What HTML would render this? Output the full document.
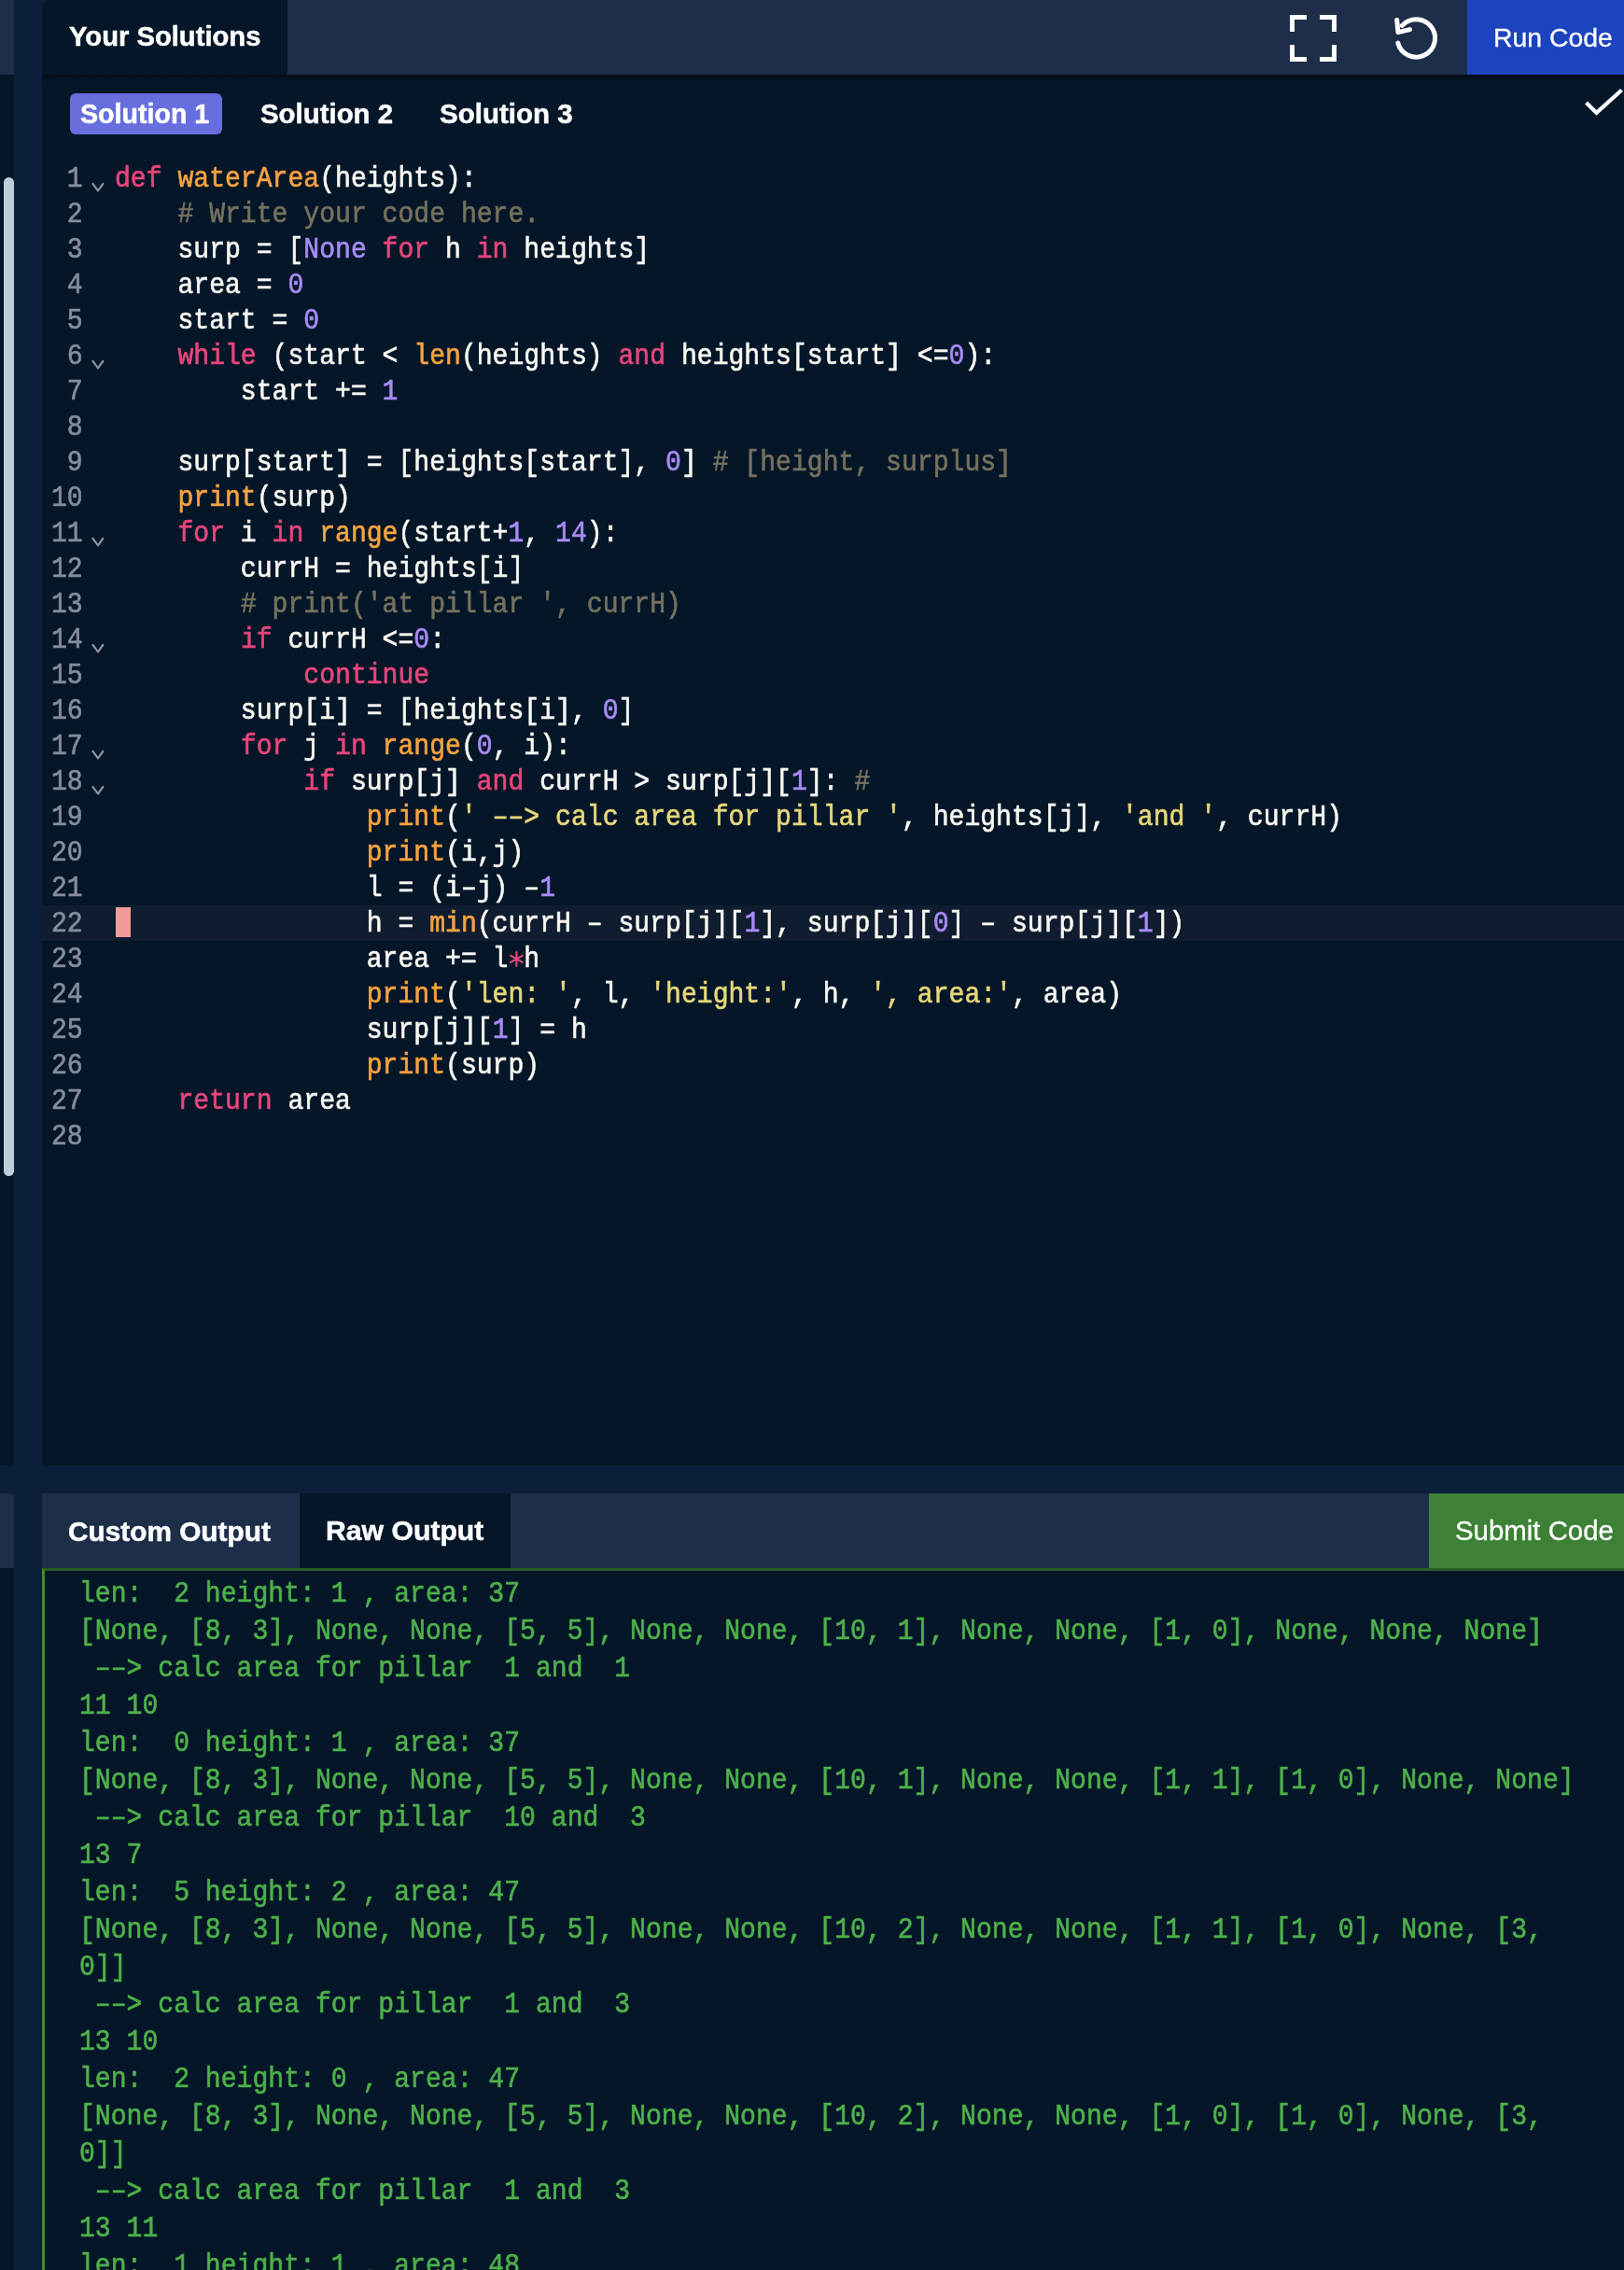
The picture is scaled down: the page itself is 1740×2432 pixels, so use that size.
<!DOCTYPE html>
<html><head><meta charset="utf-8"><style>
*{margin:0;padding:0;box-sizing:border-box}
html,body{width:1740px;height:2432px;overflow:hidden;background:#0b1f3b;position:relative}
body{font-family:"Liberation Sans",sans-serif;color:#fff}
.abs{position:absolute}
#lp1{left:0;top:0;width:15px;height:1570px;background:#041628;border-bottom-right-radius:6px;overflow:hidden}
#lp1 .hd{position:absolute;left:0;top:0;width:15px;height:80px;background:#1e2e49}
#thumb{left:4px;top:190px;width:11px;height:1070px;background:#c0cddd;border-radius:6px}
#lp2{left:0;top:1600px;width:15px;height:832px;background:#041628;border-top-right-radius:6px;overflow:hidden}
#lp2 .hd{position:absolute;left:0;top:0;width:15px;height:80px;background:#1e2e49}
#ed{left:45px;top:0;width:1695px;height:1570px;background:#041628;border-top-left-radius:6px;border-bottom-left-radius:6px;overflow:hidden}
#edhd{left:0;top:0;width:1695px;height:80px;background:#1e2e49}
#ytab{left:0;top:0;width:263px;height:80px;background:#041628;border-top-left-radius:6px}
.tt{position:absolute;font-weight:bold;font-size:28px;line-height:1;white-space:nowrap;-webkit-text-stroke:0.5px #fff}
#shadow{left:0;top:80px;width:1695px;height:8px;background:linear-gradient(#020c17,rgba(4,22,40,0))}
#run{left:1527px;top:0;width:168px;height:80px;background:#1d44bf}
.bt{position:absolute;font-size:28px;line-height:1;white-space:nowrap;-webkit-text-stroke:0.3px #fff}
#pill{left:30px;top:100px;width:163px;height:44px;background:#676edd;border-radius:6px}
.ln{position:absolute;left:0;width:43.6px;text-align:right;font-family:"Liberation Mono",monospace;font-size:28.1px;line-height:38px;height:38px;color:#848c9d;white-space:pre}
.cl{position:absolute;left:78px;font-family:"Liberation Mono",monospace;font-size:28.1px;line-height:38px;height:38px;color:#f8f8f2;white-space:pre}
.fold{position:absolute;left:53px}
.cl,.ln,.ol,.tt,.bt{will-change:transform}
.cl,.ln,.ol{transform:scaleY(1.1);transform-origin:0 26.5px;-webkit-text-stroke:0.6px currentColor}
.ol{transform-origin:0 27.5px}
.dash{}
.ast{display:inline-block;transform:translateY(7.5px) scale(1.3);-webkit-text-stroke:0.2px currentColor}
.k{color:#e8467c}.f{color:#f5a340}.n{color:#a98bf6}.s{color:#e6d77a}.c{color:#75715e}
#hl{left:0;top:970px;width:1695px;height:38px;background:#101d30}
#cur{left:79px;top:972px;width:16px;height:32px;background:#f39a9a}
#op{left:45px;top:1600px;width:1695px;height:832px;background:#041628;overflow:hidden}
#ophd{left:0;top:0;width:1695px;height:80px;background:#1e2e49}
#rawtab{left:276px;top:0;width:226px;height:80px;background:#041628}
#submit{left:1486px;top:0;width:209px;height:80px;background:#3d8136}
#gbox{left:0;top:80px;width:1700px;height:800px;border-top:3.7px solid #2b5c29;border-left:3.7px solid #3e8a3c}
.ol{position:absolute;left:40.4px;font-family:"Liberation Mono",monospace;font-size:28.1px;line-height:40px;height:40px;color:#4eb04a;white-space:pre}
</style></head><body>
<div id="lp1" class="abs"><div class="hd"></div></div>
<div id="thumb" class="abs"></div>
<div id="lp2" class="abs"><div class="hd"></div></div>
<div id="ed" class="abs">
  <div id="edhd" class="abs"></div>
  <div id="ytab" class="abs"></div>
  <div class="tt" style="left:29px;top:25.3px;font-size:29.2px">Your Solutions</div>
  <svg class="abs" style="left:1337px;top:16px" width="50" height="50" viewBox="0 0 50 50" fill="none" stroke="#fff" stroke-width="5" stroke-linecap="butt" stroke-linejoin="miter">
    <path d="M2.5 18 V2.5 H18 M32 2.5 H47.5 V18 M47.5 32 V47.5 H32 M18 47.5 H2.5 V32"/>
  </svg>
  <svg class="abs" style="left:1435px;top:0px" width="70" height="80" viewBox="1480 0 70 80" fill="none" stroke="#fff" stroke-width="5" stroke-linecap="round" stroke-linejoin="round">
    <path d="M1497.8 46.1 A20.2 20.2 0 1 0 1502.3 27.4"/>
    <path d="M1496.7 21.4 L1497.9 34.6 L1510.5 31.6"/>
  </svg>
  <div id="run" class="abs"></div>
  <div class="bt" style="left:1554.6px;top:25.8px;font-size:28.4px">Run Code</div>
  <div id="shadow" class="abs"></div>
  <div id="pill" class="abs"></div>
  <div class="tt" style="left:41px;top:107.8px;font-size:28.6px">Solution 1</div>
  <div class="tt" style="left:233.6px;top:107.2px;font-size:29.4px">Solution 2</div>
  <div class="tt" style="left:426.4px;top:107.1px;font-size:29.5px">Solution 3</div>
  <svg class="abs" style="left:1650px;top:92px" width="45" height="36" viewBox="0 0 45 36" fill="none" stroke="#fff" stroke-width="4.2" stroke-linejoin="miter">
    <path d="M4.5 18 L15.5 28.8 L42.5 4.5"/>
  </svg>
  <div id="hl" class="abs"></div>
  <div id="cur" class="abs"></div>
  <svg class="abs" style="left:495px;top:1010px" width="30" height="35" viewBox="540 1010 30 35" stroke="#e8467c" stroke-width="2.1" stroke-linecap="butt">
    <path d="M553.4 1019.2 V1035.4 M546.3 1023.3 L560.5 1031.3 M546.3 1031.3 L560.5 1023.3"/>
  </svg>
<div class="ln" style="top:174px">1</div><div class="cl" style="top:174px"><span class="k">def</span> <span class="f">waterArea</span>(heights):</div>
<svg class="fold" style="top:194px" width="14" height="14" viewBox="0 0 14 14"><path d="M1.5 3 L7 10.3 L12.3 3" fill="none" stroke="#8a92a3" stroke-width="2.2" stroke-linecap="round" stroke-linejoin="round"/></svg>
<div class="ln" style="top:212px">2</div><div class="cl" style="top:212px">    <span class="c"># Write your code here.</span></div>
<div class="ln" style="top:250px">3</div><div class="cl" style="top:250px">    surp = [<span class="n">None</span> <span class="k">for</span> h <span class="k">in</span> heights]</div>
<div class="ln" style="top:288px">4</div><div class="cl" style="top:288px">    area = <span class="n">0</span></div>
<div class="ln" style="top:326px">5</div><div class="cl" style="top:326px">    start = <span class="n">0</span></div>
<div class="ln" style="top:364px">6</div><div class="cl" style="top:364px">    <span class="k">while</span> (start &lt; <span class="f">len</span>(heights) <span class="k">and</span> heights[start] &lt;=<span class="n">0</span>):</div>
<svg class="fold" style="top:384px" width="14" height="14" viewBox="0 0 14 14"><path d="M1.5 3 L7 10.3 L12.3 3" fill="none" stroke="#8a92a3" stroke-width="2.2" stroke-linecap="round" stroke-linejoin="round"/></svg>
<div class="ln" style="top:402px">7</div><div class="cl" style="top:402px">        start += <span class="n">1</span></div>
<div class="ln" style="top:440px">8</div><div class="cl" style="top:440px"></div>
<div class="ln" style="top:478px">9</div><div class="cl" style="top:478px">    surp[start] = [heights[start], <span class="n">0</span>] <span class="c"># [height, surplus]</span></div>
<div class="ln" style="top:516px">10</div><div class="cl" style="top:516px">    <span class="f">print</span>(surp)</div>
<div class="ln" style="top:554px">11</div><div class="cl" style="top:554px">    <span class="k">for</span> i <span class="k">in</span> <span class="f">range</span>(start+<span class="n">1</span>, <span class="n">14</span>):</div>
<svg class="fold" style="top:574px" width="14" height="14" viewBox="0 0 14 14"><path d="M1.5 3 L7 10.3 L12.3 3" fill="none" stroke="#8a92a3" stroke-width="2.2" stroke-linecap="round" stroke-linejoin="round"/></svg>
<div class="ln" style="top:592px">12</div><div class="cl" style="top:592px">        currH = heights[i]</div>
<div class="ln" style="top:630px">13</div><div class="cl" style="top:630px">        <span class="c"># print(&#x27;at pillar &#x27;, currH)</span></div>
<div class="ln" style="top:668px">14</div><div class="cl" style="top:668px">        <span class="k">if</span> currH &lt;=<span class="n">0</span>:</div>
<svg class="fold" style="top:688px" width="14" height="14" viewBox="0 0 14 14"><path d="M1.5 3 L7 10.3 L12.3 3" fill="none" stroke="#8a92a3" stroke-width="2.2" stroke-linecap="round" stroke-linejoin="round"/></svg>
<div class="ln" style="top:706px">15</div><div class="cl" style="top:706px">            <span class="k">continue</span></div>
<div class="ln" style="top:744px">16</div><div class="cl" style="top:744px">        surp[i] = [heights[i], <span class="n">0</span>]</div>
<div class="ln" style="top:782px">17</div><div class="cl" style="top:782px">        <span class="k">for</span> j <span class="k">in</span> <span class="f">range</span>(<span class="n">0</span>, i):</div>
<svg class="fold" style="top:802px" width="14" height="14" viewBox="0 0 14 14"><path d="M1.5 3 L7 10.3 L12.3 3" fill="none" stroke="#8a92a3" stroke-width="2.2" stroke-linecap="round" stroke-linejoin="round"/></svg>
<div class="ln" style="top:820px">18</div><div class="cl" style="top:820px">            <span class="k">if</span> surp[j] <span class="k">and</span> currH &gt; surp[j][<span class="n">1</span>]: <span class="c">#</span></div>
<svg class="fold" style="top:840px" width="14" height="14" viewBox="0 0 14 14"><path d="M1.5 3 L7 10.3 L12.3 3" fill="none" stroke="#8a92a3" stroke-width="2.2" stroke-linecap="round" stroke-linejoin="round"/></svg>
<div class="ln" style="top:858px">19</div><div class="cl" style="top:858px">                <span class="f">print</span>(<span class="s">&#x27; <span class="dash">–</span><span class="dash">–</span>&gt; calc area for pillar &#x27;</span>, heights[j], <span class="s">&#x27;and &#x27;</span>, currH)</div>
<div class="ln" style="top:896px">20</div><div class="cl" style="top:896px">                <span class="f">print</span>(i,j)</div>
<div class="ln" style="top:934px">21</div><div class="cl" style="top:934px">                l = (i<span class="dash">–</span>j) <span class="dash">–</span><span class="n">1</span></div>
<div class="ln" style="top:972px">22</div><div class="cl" style="top:972px">                h = <span class="f">min</span>(currH <span class="dash">–</span> surp[j][<span class="n">1</span>], surp[j][<span class="n">0</span>] <span class="dash">–</span> surp[j][<span class="n">1</span>])</div>
<div class="ln" style="top:1010px">23</div><div class="cl" style="top:1010px">                area += l h</div>
<div class="ln" style="top:1048px">24</div><div class="cl" style="top:1048px">                <span class="f">print</span>(<span class="s">&#x27;len: &#x27;</span>, l, <span class="s">&#x27;height:&#x27;</span>, h, <span class="s">&#x27;, area:&#x27;</span>, area)</div>
<div class="ln" style="top:1086px">25</div><div class="cl" style="top:1086px">                surp[j][<span class="n">1</span>] = h</div>
<div class="ln" style="top:1124px">26</div><div class="cl" style="top:1124px">                <span class="f">print</span>(surp)</div>
<div class="ln" style="top:1162px">27</div><div class="cl" style="top:1162px">    <span class="k">return</span> area</div>
<div class="ln" style="top:1200px">28</div><div class="cl" style="top:1200px"></div>
</div>
<div id="op" class="abs">
  <div id="ophd" class="abs"></div>
  <div id="rawtab" class="abs"></div>
  <div class="tt" style="left:28.4px;top:25.7px;font-size:29.8px">Custom Output</div>
  <div class="tt" style="left:304.3px;top:25.3px;font-size:30.2px">Raw Output</div>
  <div id="submit" class="abs"></div>
  <div class="bt" style="left:1514px;top:25.1px;font-size:29.4px">Submit Code</div>
  <div id="gbox" class="abs"></div>
<div class="ol" style="top:89.2px">len:  2 height: 1 , area: 37</div>
<div class="ol" style="top:129.2px">[None, [8, 3], None, None, [5, 5], None, None, [10, 1], None, None, [1, 0], None, None, None]</div>
<div class="ol" style="top:169.2px"> <span class="dash">–</span><span class="dash">–</span>&gt; calc area for pillar  1 and  1</div>
<div class="ol" style="top:209.2px">11 10</div>
<div class="ol" style="top:249.2px">len:  0 height: 1 , area: 37</div>
<div class="ol" style="top:289.2px">[None, [8, 3], None, None, [5, 5], None, None, [10, 1], None, None, [1, 1], [1, 0], None, None]</div>
<div class="ol" style="top:329.2px"> <span class="dash">–</span><span class="dash">–</span>&gt; calc area for pillar  10 and  3</div>
<div class="ol" style="top:369.2px">13 7</div>
<div class="ol" style="top:409.2px">len:  5 height: 2 , area: 47</div>
<div class="ol" style="top:449.2px">[None, [8, 3], None, None, [5, 5], None, None, [10, 2], None, None, [1, 1], [1, 0], None, [3,</div>
<div class="ol" style="top:489.2px">0]]</div>
<div class="ol" style="top:529.2px"> <span class="dash">–</span><span class="dash">–</span>&gt; calc area for pillar  1 and  3</div>
<div class="ol" style="top:569.2px">13 10</div>
<div class="ol" style="top:609.2px">len:  2 height: 0 , area: 47</div>
<div class="ol" style="top:649.2px">[None, [8, 3], None, None, [5, 5], None, None, [10, 2], None, None, [1, 0], [1, 0], None, [3,</div>
<div class="ol" style="top:689.2px">0]]</div>
<div class="ol" style="top:729.2px"> <span class="dash">–</span><span class="dash">–</span>&gt; calc area for pillar  1 and  3</div>
<div class="ol" style="top:769.2px">13 11</div>
<div class="ol" style="top:809.2px">len:  1 height: 1 , area: 48</div>
</div>
</body></html>
